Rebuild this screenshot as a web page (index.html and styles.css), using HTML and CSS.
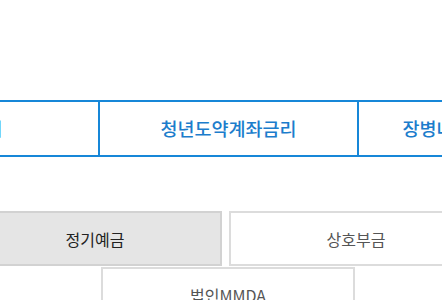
FILE: index.html
```html
<!DOCTYPE html>
<html lang="ko">
<head>
    <meta charset="UTF-8">
    <meta name="viewport" content="width=device-width, initial-scale=1.0">
    <title>금리안내</title>
    <link rel="stylesheet" href="styles.css">
</head>
<body>

    <!-- Rate tabs -->
    <div class="rate-tabs">
        <ul class="tab-list">
            <li>예금금리</li>
            <li>청년도약계좌금리</li>
            <li>장병내일준비적금금리</li>
        </ul>
    </div>

    <!-- Product buttons -->
    <div class="product-wrap">
        <div class="product-list">
            <button class="product-btn active">정기예금</button>
            <button class="product-btn">상호부금</button>
            <button class="product-btn last">법인MMDA</button>
        </div>
    </div>

</body>
</html>
```

FILE: styles.css
```css
body {
    font-family: "Noto Sans CJK KR", "Noto Sans", sans-serif;
    margin: 0;
    background-color: #fff;
    overflow: hidden;
}
.rate-tabs {
    margin-top: 100px;
    overflow: hidden;
}
.tab-list {
    display: flex;
    list-style: none;
    margin: 0 0 0 -161px;
    padding: 0;
    width: 780px;
    border-top: 2px solid #1787d8;
    border-bottom: 2px solid #1787d8;
}
.tab-list li {
    flex: 0 0 259px;
    box-sizing: border-box;
    height: 53px;
    line-height: 53px;
    text-align: center;
    font-size: 18.5px;
    font-weight: 500;
    color: #1c7dcc;
    border-left: 2px solid #1787d8;
}
.tab-list li:first-child {
    border-left: none;
}
.product-wrap {
    margin-top: 54px;
    overflow: hidden;
}
.product-list {
    display: flex;
    flex-wrap: wrap;
    column-gap: 7px;
    row-gap: 1px;
    margin-left: -32px;
    width: 520px;
}
.product-btn {
    width: 254px;
    height: 55px;
    padding: 0;
    font-family: inherit;
    font-size: 16px;
    color: #555;
    background: #fff;
    border: 2px solid #dcdcdc;
    cursor: pointer;
}
.product-btn.active {
    background: #e5e5e5;
    border-color: #d2d2d2;
    color: #222;
}
.product-btn.last {
    margin-left: 133px;
}
```
